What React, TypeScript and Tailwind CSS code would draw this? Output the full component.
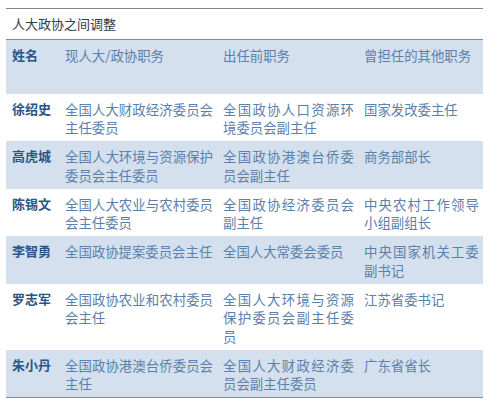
const rows = [
  {
    name: "徐绍史",
    now: "全国人大财政经济委员会主任委员",
    before: "全国政协人口资源环境委员会副主任",
    other: "国家发改委主任",
  },
  {
    name: "高虎城",
    now: "全国人大环境与资源保护委员会主任委员",
    before: "全国政协港澳台侨委员会副主任",
    other: "商务部部长",
  },
  {
    name: "陈锡文",
    now: "全国人大农业与农村委员会主任委员",
    before: "全国政协经济委员会副主任",
    other: "中央农村工作领导小组副组长",
  },
  {
    name: "李智勇",
    now: "全国政协提案委员会主任",
    before: "全国人大常委会委员",
    other: "中央国家机关工委副书记",
  },
  {
    name: "罗志军",
    now: "全国政协农业和农村委员会主任",
    before: "全国人大环境与资源保护委员会副主任委员",
    other: "江苏省委书记",
  },
  {
    name: "朱小丹",
    now: "全国政协港澳台侨委员会主任",
    before: "全国人大财政经济委员会副主任委员",
    other: "广东省省长",
  },
];

const font = { fontFamily: '"Noto Sans CJK SC", "Noto Sans", sans-serif' };

export default function App() {
  return (
    <div className="w-[489px] h-[403px] bg-white pt-[8px] px-[6px]" style={font}>
      <div className="border-t border-[#7d8794]">
        <div className="h-[30px] flex items-center pl-[6px] text-[13px] text-[#2f3b47]">
          人大政协之间调整
        </div>
        <table className="w-[477px] table-fixed border-collapse border-t border-b border-[#7f8c9c] text-[13.4px] leading-[18.5px]">
          <colgroup>
            <col className="w-[53px]" />
            <col className="w-[158px]" />
            <col className="w-[141px]" />
            <col className="w-[125px]" />
          </colgroup>
          <thead>
            <tr className="bg-[#d4e0ee] h-[54px] align-top">
              <th className="pl-[6px] pr-[4px] pt-[6px] text-left font-bold text-[13px] text-[#2b5586]">姓名</th>
              <th className="pl-[6px] pr-[4px] pt-[6px] text-left font-normal text-[#5b80aa]">现人大/政协职务</th>
              <th className="pl-[6px] pr-[4px] pt-[6px] text-left font-normal text-[#5b80aa]">出任前职务</th>
              <th className="pl-[6px] pr-[4px] pt-[6px] text-left font-normal text-[#5b80aa]">曾担任的其他职务</th>
            </tr>
          </thead>
          <tbody>
            {rows.map((r, i) => (
              <tr key={r.name} className={i % 2 === 1 ? "bg-[#d4e0ee] align-top" : "bg-white align-top"}>
                <td className="pl-[6px] pr-[4px] pt-[6px] pb-[4.5px] font-bold text-[13px] text-[#2b5586]">{r.name}</td>
                <td className="pl-[6px] pr-[4px] pt-[6px] pb-[4.5px] text-justify text-[#5b80aa]">{r.now}</td>
                <td className="pl-[6px] pr-[4px] pt-[6px] pb-[4.5px] text-justify text-[#5b80aa]">{r.before}</td>
                <td className="pl-[6px] pr-[4px] pt-[6px] pb-[4.5px] text-justify text-[#5b80aa]">{r.other}</td>
              </tr>
            ))}
          </tbody>
        </table>
      </div>
    </div>
  );
}
